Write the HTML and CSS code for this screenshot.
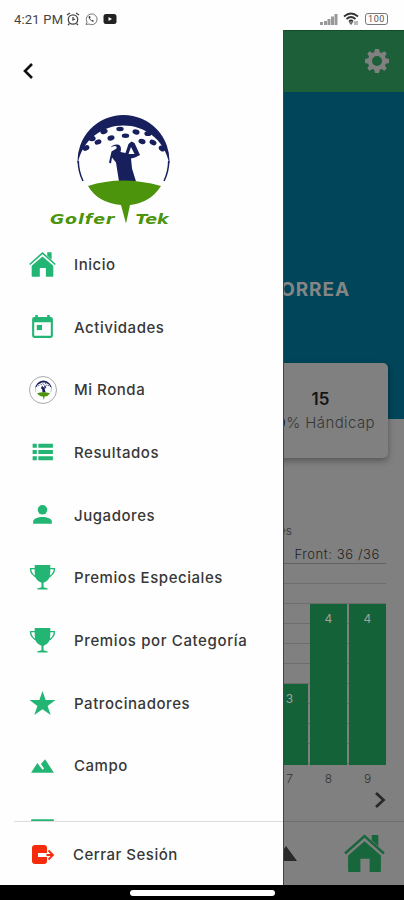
FILE: index.html
```
<!DOCTYPE html>
<html lang="es">
<head>
<meta charset="utf-8">
<title>Golfer Tek</title>
<link rel="stylesheet" href="styles.css">
</head>
<body>
<svg class="defs" width="0" height="0">
  <defs>
    <symbol id="house" viewBox="0 0 40 40"><path d="M4 22 20 8l16 14v15q0 1-1 1H25V25h-9v13H5q-1 0-1-1z"/><path d="M1 20 20 3l19 17" fill="none" stroke="currentColor" stroke-width="2.4"/><path d="M27 2h6.500v11L27 7z"/></symbol>
    <symbol id="trophy" viewBox="0 0 26 26"><path d="M5.500 1h15v7q0 8.500-6.500 10v4.500l4 1v1H8v-1l4-1V18Q5.500 16.500 5.500 8z"/><path d="M7 4.500H1.500q0 6 7 8.500M19 4.500h5.500q0 6-7 8.500" fill="none" stroke="currentColor" stroke-width="1.300"/></symbol>
    <symbol id="emblem" viewBox="0 0 120 112">
      <path d="M27.600 52A46 46 0 1 1 119.400 52C109 .5 38 .5 27.600 52Z" fill="#17205c"/>
      <path d="M33 69A45.500 45.500 0 0 1 28.300 49M114 69A45.500 45.500 0 0 0 118.700 49" fill="none" stroke="#17205c" stroke-width="1.500"/>
      <g fill="#17205c"><ellipse cx="36" cy="36" rx="3.500" ry="2.600" transform="rotate(-25 36 36)"/><ellipse cx="42" cy="26.500" rx="3.600" ry="2.800"/><ellipse cx="48" cy="30" rx="3.500" ry="2.500" transform="rotate(-20 48 30)"/><ellipse cx="54" cy="19.500" rx="3.700" ry="2.500" transform="rotate(-15 54 19.500)"/><ellipse cx="61" cy="26" rx="3.600" ry="2.500" transform="rotate(-15 61 26)"/><ellipse cx="70" cy="17" rx="3.700" ry="2.200"/><ellipse cx="75.500" cy="23.700" rx="3.700" ry="2.200"/><ellipse cx="86" cy="20" rx="3.600" ry="2.500" transform="rotate(15 86 20)"/><ellipse cx="92" cy="29.500" rx="3.600" ry="2.500" transform="rotate(15 92 29.500)"/><ellipse cx="98" cy="21.500" rx="3.600" ry="2.600"/><ellipse cx="103" cy="30.500" rx="3.600" ry="2.500" transform="rotate(25 103 30.500)"/><ellipse cx="112" cy="36.500" rx="3.500" ry="2.600" transform="rotate(35 112 36.500)"/></g>
      <path d="M61 35q1-2 6-2.500 4 0 4 5l-.5 2.500 5 1 3-9 3-2.500 3 1.500 5.500 12-5 2.500-4 1 1 10 4 13H69l-3-19-4-5-1 6-2-1 2.500-11 5-3v-2l-2-.5z" fill="#17205c"/>
      <path d="m81 35 3.500 7h-6z" fill="#fff"/>
      <path d="M38 74q34-11 73 0-11 17-31 19l-4 18.500L71 93Q48 91 38 74Z" fill="#4b940b"/>
    </symbol>
  </defs>
</svg>
<div class="phone">
  <header class="status">
    <span class="time">4:21 PM</span>
    <svg class="s-alarm" viewBox="0 0 14 14"><g fill="none" stroke="#444" stroke-width="1.300"><circle cx="7" cy="7.500" r="4.700"/><path d="M7 5v3l2-1M1 3l3-2M13 3l-3-2M3.500 11.500 2 13M10.500 11.500 12 13"/></g></svg>
    <svg class="s-wa" viewBox="0 0 14 14"><path d="M2 12.500 3 10a5.400 5.400 0 1 1 2 2z" fill="none" stroke="#777"/><path d="M5 4q-1 1 0 2.500T8 9.500q1.500.5 2-.5L8.500 7.800l-.7.600Q6.400 7.600 6 6.200l.6-.7L6 4z" fill="#444"/></svg>
    <svg class="s-tube" viewBox="0 0 14 12"><rect x=".5" y="1" width="13" height="10" rx="2.500" fill="#222"/><path d="M5.500 4v4L9 6z" fill="#fff"/></svg>
    <span class="grow"></span>
    <svg class="s-signal" viewBox="0 0 18 12"><path d="M0 9h3v3H0zM4 8h3v4H4zM7.500 6h3v6h-3zM11 3.500h3V12h-3zM14.500 1h3v11h-3z" fill="#999"/></svg>
    <svg class="s-wifi" viewBox="0 0 17 14"><g fill="none" stroke="#333" stroke-width="1.700"><path d="M1 4.500q7-6 14 0M3.500 7q4.500-4 9 0M6 9.500q2-2 4 0"/></g><path d="m8 12.500 1.500-2h-3zM12 9v4m2-4v4" stroke="#777"/></svg>
    <span class="battery">100</span>
  </header>
  <main class="screen">
    <div class="topbar">
      <svg class="gear" viewBox="0 0 24 24"><path fill-rule="evenodd" d="m10 0-.8 3.300-1.700.7-3-1.700-2.200 2.200L4 7.500l-.7 1.700L0 10v4l3.300.8.7 1.700-1.700 3 2.200 2.200 3-1.700 1.700.7L10 24h4l.8-3.300 1.700-.7 3 1.700 2.200-2.200-1.700-3 .7-1.700L24 14v-4l-3.300-.8-.7-1.700 1.700-3-2.200-2.200-3 1.700-1.700-.7L14 0zM12 7a5 5 0 1 1 0 10 5 5 0 0 1 0-10Z"/></svg>
    </div>
    <section class="hero"><h1>CORREA</h1></section>
    <section class="card"><strong>15</strong><span><b>100</b>% Hándicap</span></section>
    <section class="stats">
      <div class="legend">Golpes</div>
      <div class="front">Front: 36 /36</div>
      <div class="chart"><div class="bar short">3</div><div class="bar">4</div><div class="bar">4</div></div>
      <div class="holes"><span>7</span><span>8</span><span>9</span></div>
      <svg class="next" viewBox="0 0 12 18"><path d="m2 2 7.500 7L2 16" fill="none" stroke="#292929" stroke-width="2.800"/></svg>
    </section>
    <nav class="tabs">
      <svg class="peak" viewBox="0 0 28 15"><path d="M0 15 10 3l3 3 4-6 11 15z" fill="#292929"/></svg>
      <svg class="home"><use href="#house"/></svg>
    </nav>
  </main>
  <aside class="drawer">
    <svg class="back" viewBox="0 0 12 18"><path d="M10 2 3 9l7 7" fill="none" stroke="#111" stroke-width="2.600"/></svg>
    <div class="logo">
      <svg class="emblem"><use href="#emblem"/></svg>
      <div class="brand"><span>Golfer</span><span>Tek</span></div>
    </div>
    <ul class="menu">
      <li><svg viewBox="0 0 26 26"><use href="#house"/></svg><span>Inicio</span></li>
      <li><svg viewBox="0 0 26 26"><path fill-rule="evenodd" d="M6 1h2.500v2h9V1H20v2h1q2 0 2 2v16q0 2-2 2H5q-2 0-2-2V5q0-2 2-2h1zM5 8v13h16V8z"/><path d="M7.500 10.500h5v5h-5z"/></svg><span>Actividades</span></li>
      <li><i class="round"><svg><use href="#emblem"/></svg></i><span>Mi Ronda</span></li>
      <li><svg viewBox="0 0 26 26"><path d="M3.500 4.500h4v4h-4zm5.500 0h14v4H9zm-5.500 6h4v4h-4zm5.500 0h14v4H9zm-5.500 6h4v4h-4zm5.500 0h14v4H9z"/></svg><span>Resultados</span></li>
      <li><svg viewBox="0 0 26 26"><circle cx="13" cy="7.500" r="4.600"/><path d="M4 21v-2c0-6 18-6 18 0v2z"/></svg><span>Jugadores</span></li>
      <li><svg><use href="#trophy"/></svg><span>Premios Especiales</span></li>
      <li><svg><use href="#trophy"/></svg><span class="wide">Premios por Categoría</span></li>
      <li><svg viewBox="0 0 26 26"><path d="m13 1 3 8.600 9.500.1-7.600 5.600 3 8.700-7.900-5.400L5.100 24l3-8.700L.5 9.700l9.500-.1z"/></svg><span>Patrocinadores</span></li>
      <li><svg viewBox="0 0 26 26"><path d="m2 20 6-9.500 5 6.500 1.500-1.200-3-4.300L15.500 7 24 20z"/></svg><span>Campo</span></li>
      <li><svg viewBox="0 0 26 26"><rect x="2" y="4" width="22" height="18" rx="1"/></svg></li>
    </ul>
    <div class="logout">
      <svg viewBox="0 0 24 22"><rect x="1" y="1" width="15" height="19" rx="3" fill="#f52c0c"/><path d="M7 11h15M17.500 6.500 22 11l-4.500 4.500" fill="none" stroke="#fff" stroke-width="4"/><path d="M8 11h14M17.500 6.500 22 11l-4.500 4.500" fill="none" stroke="#f52c0c" stroke-width="1.800"/><path d="M7 11h8.500" stroke="#fff" stroke-width="2"/></svg>
      <span>Cerrar Sesión</span>
    </div>
  </aside>
  <footer class="gesture"><i></i></footer>
</div>
</body>
</html>
```
FILE: styles.css
```
* { box-sizing: border-box; }
body { margin: 0; font-family: Inter, "Noto Sans", sans-serif; }
svg { display: block; flex: none; }
.defs { position: absolute; }
.phone { position: relative; display: flex; flex-direction: column; width: 404px; height: 900px; background: #fefefe; overflow: hidden; }
.status { display: flex; align-items: center; height: 30px; padding: 8px 16px 0 14px; }
.time { width: 51px; font: 13px Roboto, sans-serif; color: #444; white-space: nowrap; letter-spacing: .2px; }
.grow { flex: 1; }
.s-alarm { width: 14px; height: 14px; margin-left: 1px; }
.s-wa { width: 14px; height: 14px; margin-left: 4px; }
.s-tube { width: 14px; height: 12px; margin-left: 5px; }
.s-signal { width: 18px; height: 12px; }
.s-wifi { width: 17px; height: 14px; margin: 0 5px; }
.battery { width: 23px; height: 12px; border: 1px solid #777; border-radius: 3px; font: 9px/10px Roboto, sans-serif; text-align: center; color: #555; letter-spacing: .6px; }
.screen { height: 855px; display: flex; flex-direction: column; background: #808080; }
.topbar { height: 62px; display: flex; justify-content: flex-end; padding: 18px 15px; background: #1c5f39; border-top: 1px solid #164b2a; }
.gear { width: 24px; height: 24px; fill: #808080; }
.hero { height: 327px; padding: 187px 54px 0 0; background: #004559; text-align: right; }
h1 { margin: 0; font-size: 19px; line-height: 22px; color: #858585; letter-spacing: .9px; }
.card { display: flex; flex-direction: column; align-items: center; width: 135px; height: 95px; margin: -56px 16px 0 auto; padding-top: 25px; background: #808080; border-radius: 5px; box-shadow: 0 3px 7px #0005; white-space: nowrap; }
.card strong { font-size: 17px; line-height: 22px; font-weight: 600; color: #151515; }
.card span { font-size: 15px; line-height: 26px; color: #363636; font-weight: 300; letter-spacing: .4px; align-self: flex-end; margin-right: 13px; }
.card b { color: #151515; }
.stats { display: flex; flex-direction: column; height: 363px; padding: 65px 18px 0 240px; font-weight: 300; }
.legend { width: 52px; height: 16px; font-size: 12px; line-height: 16px; text-align: right; color: #333; }
.front { height: 25px; padding: 7px 6px 0 0; text-align: right; font-size: 13px; line-height: 16px; letter-spacing: .6px; white-space: nowrap; color: #222; border-bottom: 1px solid #626262; }
.chart { display: flex; align-items: flex-end; justify-content: flex-end; gap: 2px; height: 201px; background: repeating-linear-gradient(#0000 0 19px, #6d6d6d 19px 20px); }
.bar { flex: 0 0 37px; height: 161px; padding-top: 5px; background: #146238; color: #a0a0a0; text-align: center; font-size: 12px; line-height: 20px; font-weight: 400; }
.short { height: 81px; }
.holes { display: flex; justify-content: flex-end; gap: 2px; height: 28px; font-size: 12px; line-height: 28px; color: #333; }
.holes span { width: 37px; text-align: center; }
.next { width: 12px; height: 18px; margin: -2px 0 0 auto; }
.tabs { height: 64px; margin-top: auto; display: flex; align-items: center; justify-content: flex-end; gap: 47px; padding-right: 19px; border-top: 1px solid #6d6d6d; }
.peak { width: 28px; height: 15px; }
.home { width: 41px; height: 41px; fill: #18663b; color: #18663b; }
.drawer { position: absolute; left: 0; top: 30px; width: 284px; height: 855px; display: flex; flex-direction: column; background: #fefefe; border-right: 1px solid #444; }
.back { width: 12px; height: 18px; margin: 32px 0 0 22px; }
.logo { height: 149px; padding-left: 50px; }
.emblem { width: 120px; height: 112px; margin-top: 32px; }
.brand { display: flex; justify-content: space-between; width: 118px; margin-top: -14px; font: italic bold 14.5px/18px "DejaVu Sans", sans-serif; color: #4b940b; }
.brand span { transform: scaleX(1.2); transform-origin: left; letter-spacing: .7px; }
.brand span:last-child { transform-origin: right; letter-spacing: 0; }
.menu { list-style: none; margin: 0; padding: 4px 0 0 29px; height: 592px; overflow: hidden; }
.menu li { display: flex; align-items: center; gap: 18px; height: 62.7px; font-size: 15px; font-weight: 500; letter-spacing: .55px; color: #383838; white-space: nowrap; }
.menu .wide { letter-spacing: .62px; }
.menu svg { width: 27px; height: 27px; fill: #22b573; color: #22b573; }
.round { width: 28px; height: 28px; margin-right: -1px; display: grid; place-items: center; border: 1px solid #aaa; border-radius: 50%; }
.menu .round svg { width: 22px; height: 20px; margin-left: -5px; }
.logout { display: flex; align-items: center; gap: 18px; height: 64px; margin-left: 14px; padding: 2px 0 0 17px; border-top: 1px solid #ddd; font-size: 15px; font-weight: 500; letter-spacing: .5px; color: #383838; }
.logout svg { width: 24px; height: 22px; }
.gesture { height: 15px; background: #000; padding: 5px 0 0 130px; z-index: 1; }
.gesture i { display: block; width: 145px; height: 6px; border-radius: 3px; background: #fff; }
```
